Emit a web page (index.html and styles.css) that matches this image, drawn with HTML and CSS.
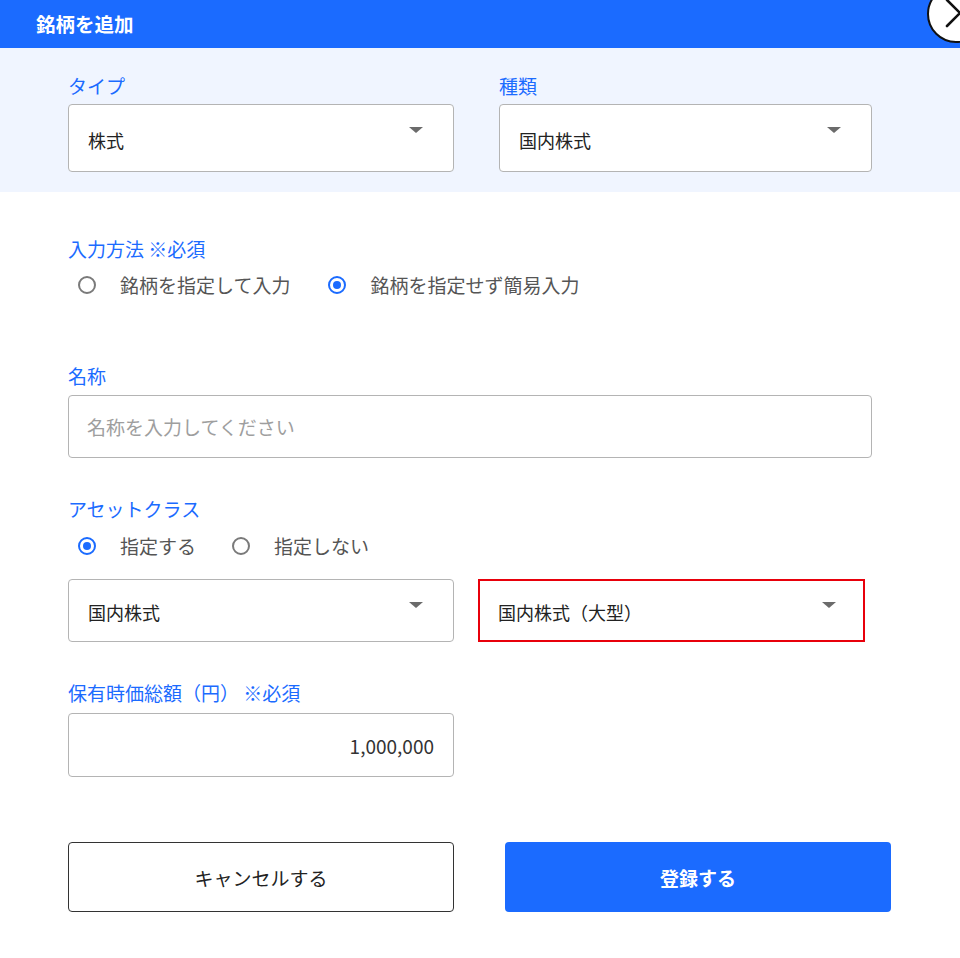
FILE: index.html
```html
<!DOCTYPE html>
<html lang="ja">
<head>
<meta charset="utf-8">
<title>銘柄を追加</title>
<link rel="stylesheet" href="styles.css">
</head>
<body>
<div class="dialog">
  <header class="header">
    <h1 class="title">銘柄を追加</h1>
    <button class="close" type="button" aria-label="閉じる">
      <svg class="close-icon" width="58" height="58" viewBox="0 0 58 58" aria-hidden="true">
        <path d="M20 15 L46 41 M20 41 L46 15" stroke="#111" stroke-width="2.6" stroke-linecap="round" fill="none"/>
      </svg>
    </button>
  </header>

  <section class="top">
    <div class="top-grid">
      <div class="field">
        <div class="label">タイプ</div>
        <div class="select tall"><span>株式</span><i class="caret"></i></div>
      </div>
      <div class="field">
        <div class="label">種類</div>
        <div class="select tall"><span>国内株式</span><i class="caret"></i></div>
      </div>
    </div>
  </section>

  <section class="form">
    <div class="block b-method">
      <div class="label">入力方法 ※必須</div>
      <div class="radio-group g-method">
        <label class="radio"><span class="circle"></span><span class="rtext">銘柄を指定して入力</span></label>
        <label class="radio"><span class="circle checked"></span><span class="rtext">銘柄を指定せず簡易入力</span></label>
      </div>
    </div>

    <div class="block b-name">
      <div class="label">名称</div>
      <div class="input name-input"><span class="placeholder">名称を入力してください</span></div>
    </div>

    <div class="block b-asset">
      <div class="label">アセットクラス</div>
      <div class="radio-group g-asset">
        <label class="radio"><span class="circle checked"></span><span class="rtext">指定する</span></label>
        <label class="radio"><span class="circle"></span><span class="rtext">指定しない</span></label>
      </div>
      <div class="asset-grid">
        <div class="select short"><span>国内株式</span><i class="caret"></i></div>
        <div class="select short highlight"><span>国内株式（大型）</span><i class="caret"></i></div>
      </div>
    </div>

    <div class="block b-amount">
      <div class="label">保有時価総額（円） ※必須</div>
      <div class="input amount-input"><span class="amount">1,000,000</span></div>
    </div>

    <div class="buttons">
      <button class="btn cancel" type="button">キャンセルする</button>
      <button class="btn submit" type="button">登録する</button>
    </div>
  </section>
</div>
</body>
</html>
```

FILE: styles.css
```css
* { box-sizing: border-box; }

html, body {
  margin: 0;
  padding: 0;
  background: #ffffff;
}

body {
  font-family: "Noto Sans CJK JP", "Noto Sans", sans-serif;
  color: #222;
  width: 960px;
  height: 958px;
  overflow: hidden;
}

.dialog {
  width: 960px;
}

.header {
  position: relative;
  height: 48px;
  background: #1b6bff;
  display: flex;
  align-items: center;
  padding-left: 36px;
}

.title {
  margin: 0;
  font-size: 19.5px;
  font-weight: 700;
  color: #fff;
  line-height: 1;
}

.close {
  position: absolute;
  left: 927px;
  top: -15px;
  width: 58px;
  height: 58px;
  border-radius: 50%;
  border: 2px solid #111;
  background: #fff;
  padding: 0;
  margin: 0;
  overflow: hidden;
}

.close-icon {
  display: block;
  margin: -2px 0 0 -2px;
}

.top {
  background: #f0f5ff;
  padding: 26px 0 20px 68px;
}

.top-grid {
  display: grid;
  grid-template-columns: 386px 373px;
  column-gap: 45px;
}

.label {
  font-size: 19px;
  line-height: 24px;
  color: #1b6bff;
}

.field .label {
  margin-bottom: 6px;
}

.select {
  display: flex;
  align-items: center;
  justify-content: space-between;
  background: #fff;
  border: 1px solid #b4b4b4;
  border-radius: 4px;
  padding: 4px 30px 0 19px;
  font-size: 18px;
  color: #222;
}

.select.tall {
  height: 68px;
}

.select.short {
  height: 63px;
  padding-top: 3px;
}

.caret {
  align-self: flex-start;
  margin-top: 18px;
  width: 0;
  height: 0;
  border-left: 7px solid transparent;
  border-right: 7px solid transparent;
  border-top: 6px solid #6b6b6b;
}

.select.short .caret {
  margin-top: 19px;
}

.select.highlight {
  border: 2px solid #e8000b;
  border-radius: 0;
  padding-left: 18px;
  padding-right: 27px;
}

.select.highlight .caret {
  margin-top: 18px;
}

.form {
  padding-left: 68px;
  width: 960px;
}

.b-method { margin-top: 45px; }
.b-name { margin-top: 65px; }
.b-asset { margin-top: 39px; }
.b-amount { margin-top: 39px; }

.radio-group {
  display: flex;
  align-items: center;
  height: 28px;
  padding-left: 10px;
  gap: 38px;
}

.g-method { margin-top: 10px; }
.g-asset { margin-top: 11px; gap: 36px; }

.radio {
  display: flex;
  align-items: center;
  gap: 24px;
}

.circle {
  width: 18px;
  height: 18px;
  border: 2px solid #7a7a7a;
  border-radius: 50%;
  display: flex;
  align-items: center;
  justify-content: center;
  flex: none;
}

.circle.checked {
  border-color: #1b6bff;
}

.circle.checked::after {
  content: "";
  width: 8px;
  height: 8px;
  border-radius: 50%;
  background: #1b6bff;
}

.rtext {
  font-size: 19px;
  color: #555;
  line-height: 28px;
}

.input {
  display: flex;
  align-items: center;
  background: #fff;
  border: 1px solid #b4b4b4;
  border-radius: 4px;
  font-size: 19px;
}

.name-input {
  margin-top: 7px;
  width: 804px;
  height: 63px;
  padding-left: 18px;
}

.placeholder {
  color: #9e9e9e;
}

.asset-grid {
  margin-top: 19px;
  display: grid;
  grid-template-columns: 386px 387px;
  column-gap: 24px;
  align-items: start;
}

.amount-input {
  margin-top: 8px;
  width: 386px;
  height: 64px;
  justify-content: flex-end;
  padding-right: 19px;
}

.amount {
  font-size: 19px;
  color: #333;
}

.buttons {
  margin-top: 65px;
  display: grid;
  grid-template-columns: 386px 386px;
  column-gap: 51px;
}

.btn {
  height: 70px;
  border-radius: 4px;
  font-family: "Noto Sans CJK JP", "Noto Sans", sans-serif;
  font-size: 19px;
  cursor: pointer;
  margin: 0;
}

.cancel {
  background: #fff;
  border: 1px solid #333;
  color: #222;
  font-weight: 400;
}

.submit {
  background: #1b6bff;
  border: none;
  color: #fff;
  font-weight: 700;
}
```
